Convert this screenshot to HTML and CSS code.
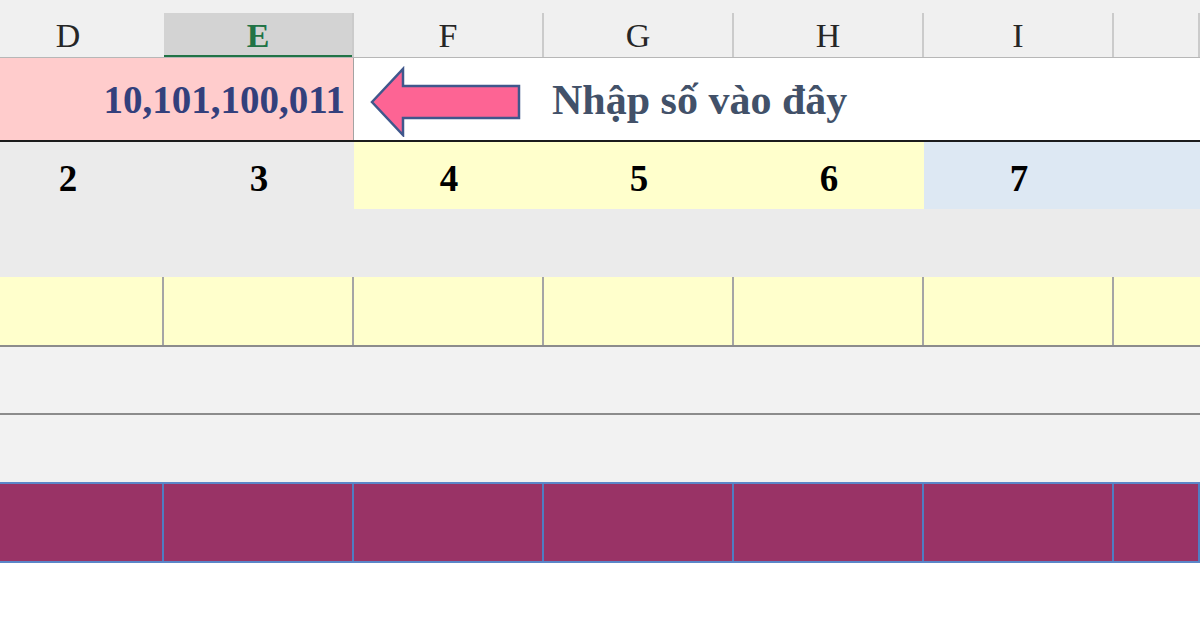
FILE: index.html
```html
<!DOCTYPE html>
<html lang="vi">
<head>
<meta charset="utf-8">
<title>Nhập số</title>
<link rel="stylesheet" href="styles.css">
</head>
<body>
<div class="sheet">
  <div class="row hdr">
    <div class="hc first">D</div>
    <div class="hc sel">E</div>
    <div class="hc">F</div>
    <div class="hc">G</div>
    <div class="hc">H</div>
    <div class="hc">I</div>
    <div class="hc"></div>
  </div>
  <div class="row r1">
    <div class="input">10,101,100,011</div>
    <div class="note">
      <svg class="arrow" width="156" height="72" viewBox="0 0 156 72">
        <polygon points="3,37 34,4 34,21 150,21 150,53 34,53 34,70" fill="#fd6494" stroke="#40578c" stroke-width="2.5" stroke-linejoin="miter"/>
      </svg>
      <span class="note-text">Nhập số vào đây</span>
    </div>
  </div>
  <div class="row r2">
    <div class="nc first grey">2</div>
    <div class="nc grey">3</div>
    <div class="nc yellow">4</div>
    <div class="nc yellow">5</div>
    <div class="nc yellow">6</div>
    <div class="nc blue">7</div>
    <div class="nc blue"></div>
  </div>
  <div class="row r3"></div>
  <div class="row r4">
    <div class="c"></div><div class="c"></div><div class="c"></div><div class="c"></div><div class="c"></div><div class="c"></div><div class="c"></div>
  </div>
  <div class="row r5"></div>
  <div class="row r6"></div>
  <div class="row r7">
    <div class="c"></div><div class="c"></div><div class="c"></div><div class="c"></div><div class="c"></div><div class="c"></div><div class="c"></div>
  </div>
</div>
</body>
</html>
```
FILE: styles.css
```css
html, body {
  margin: 0;
  padding: 0;
  background: #ffffff;
  overflow: hidden;
  width: 1200px;
  height: 630px;
}

.sheet {
  width: 1200px;
  font-family: "Liberation Serif", "Times New Roman", serif;
}

.row {
  display: grid;
  grid-template-columns: 164px repeat(5, 190px) 86px;
  box-sizing: border-box;
}

/* the first, partly scrolled-off column keeps its centre at x=68 */
.first {
  padding-right: 28px;
}

/* column header */
.hdr {
  height: 58px;
  padding-top: 13px;
  background: #f0f0f0;
  border-bottom: 1px solid #b7b7b7;
}
.hc {
  box-sizing: border-box;
  height: 44px;
  border-right: 2px solid #cbcbcb;
  display: flex;
  align-items: center;
  justify-content: center;
  font-size: 34px;
  color: #262626;
  padding-top: 2px;
}
.hc.first {
  border-right: none;
}
.hc.sel {
  background: #d3d3d3;
  color: #217346;
  font-weight: bold;
  box-shadow: inset 0 -2px 0 #217346;
}

/* input row */
.r1 {
  height: 84px;
  border-bottom: 2px solid #1c1c1c;
}
.input {
  grid-column: 1 / span 2;
  background: #ffcccc;
  border-right: 1px solid #a3a3a3;
  display: flex;
  align-items: center;
  justify-content: flex-end;
  padding-right: 8px;
  font-size: 39px;
  font-weight: bold;
  color: #33407c;
}
.note {
  grid-column: 3 / span 5;
  display: flex;
  align-items: center;
  overflow: hidden;
}
.arrow {
  margin-left: 15px;
  margin-top: 3px;
  flex: none;
}
.note-text {
  margin-left: 27px;
  font-size: 42px;
  font-weight: bold;
  color: #425169;
  padding-top: 2px;
  white-space: nowrap;
}

/* number row */
.r2 {
  height: 67px;
}
.nc {
  display: flex;
  align-items: center;
  justify-content: center;
  font-size: 37px;
  font-weight: bold;
  color: #000000;
  padding-top: 5px;
}
.grey { background: #ebebeb; }
.yellow { background: #ffffcc; }
.blue { background: #dde8f3; }

.r3 {
  height: 68px;
  background: #ebebeb;
}

.c {
  box-sizing: border-box;
  border-right: 2px solid #a5a5a5;
}
.c:last-child {
  border-right: none;
}

.r4 {
  height: 70px;
  background: #ffffcc;
  border-bottom: 2px solid #8c8c8c;
}

.r5 {
  height: 68px;
  background: #f2f2f2;
  border-bottom: 2px solid #8c8c8c;
}

.r6 {
  height: 67px;
  background: #f2f2f2;
}

.r7 {
  height: 81px;
  background: #993366;
  border-top: 2px solid #5b86c8;
  border-bottom: 2px solid #5b86c8;
}
.r7 .c {
  border-right: 2px solid #4f7cc2;
}
```
